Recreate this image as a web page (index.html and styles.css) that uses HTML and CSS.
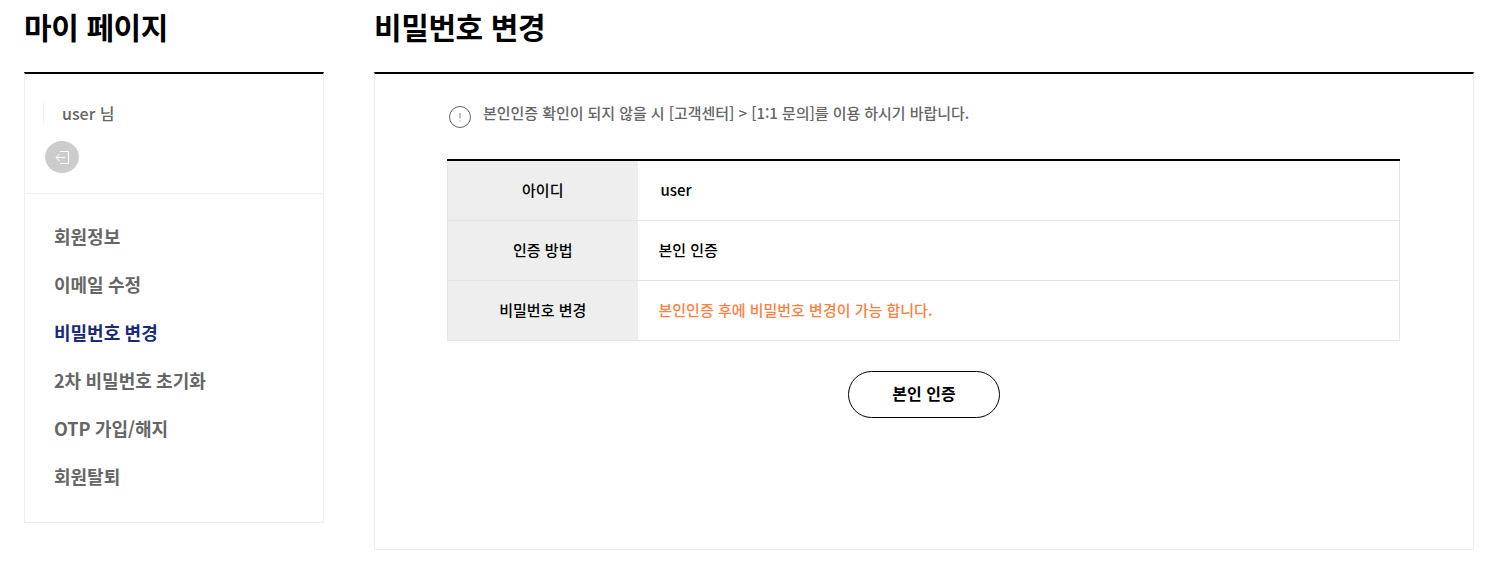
FILE: index.html
```html
<!DOCTYPE html>
<html lang="ko">
<head>
<meta charset="utf-8" />
<title>비밀번호 변경</title>
<link rel="stylesheet" href="styles.css">
</head>
<body>
<div class="wrap">
	<div class="side">
		<h2 class="page_title">마이 페이지</h2>
		<div class="side_box">
			<div class="user_area">
				<p class="user_name">user 님</p>
				<a class="logout" href="#"><svg width="14" height="13" viewBox="0 0 14 13" fill="none" stroke="#fff" stroke-width="1"><path d="M5 0.5H13.5V12.5H5"/><path d="M10 6.5H1M4.5 3L1 6.5L4.5 10"/></svg></a>
			</div>
			<ul class="side_menu">
				<li>회원정보</li>
				<li>이메일 수정</li>
				<li class="on">비밀번호 변경</li>
				<li>2차 비밀번호 초기화</li>
				<li>OTP 가입/해지</li>
				<li>회원탈퇴</li>
			</ul>
		</div>
	</div>
	<div class="main">
		<h2 class="page_title">비밀번호 변경</h2>
		<div class="main_box">
			<p class="notice"><svg width="22" height="22" viewBox="0 0 22 22" fill="none"><circle cx="11" cy="11" r="10.5" stroke="#666"/><path d="M11 7V12.5M11 14.5V15.5" stroke="#a0708a"/></svg><span>본인인증 확인이 되지 않을 시 [고객센터] &gt; [1:1 문의]를 이용 하시기 바랍니다.</span></p>
			<table class="info_table">
				<tr>
					<th>아이디</th>
					<td class="user_id">user</td>
				</tr>
				<tr>
					<th>인증 방법</th>
					<td>본인 인증</td>
				</tr>
				<tr>
					<th>비밀번호 변경</th>
					<td class="warn">본인인증 후에 비밀번호 변경이 가능 합니다.</td>
				</tr>
			</table>
			<div class="btn_area"><a class="btn_auth" href="#">본인 인증</a></div>
		</div>
	</div>
</div>
</body>
</html>
```

FILE: styles.css
```css
* {
	box-sizing: border-box;
}
body {
	margin: 0;
	font-family: "Noto Sans CJK KR", "Noto Sans", sans-serif;
	font-size: 14px;
	color: #000;
	background-color: #fff;
}
ul, p, h2 {
	margin: 0;
	padding: 0;
}
.wrap {
	display: flex;
	gap: 50px;
	padding: 0 17px 0 24px;
}
.side {
	width: 300px;
}
.main {
	width: 1100px;
}
.page_title {
	height: 72px;
	font-size: 30px;
	line-height: 52px;
	font-weight: 700;
	letter-spacing: -0.4px;
}
.side_box {
	height: 451px;
	border: 1px solid #eee;
	border-top: 2px solid #000;
}
.user_area {
	height: 120px;
	padding: 28px 0 0 18px;
	border-bottom: 1px solid #eee;
}
.user_name {
	padding-left: 18px;
	border-left: 1px solid #f4f4f4;
	font-size: 16px;
	line-height: 22px;
	font-weight: 500;
	color: #666;
}
.logout {
	display: flex;
	align-items: center;
	justify-content: center;
	width: 34px;
	height: 32px;
	margin: 17px 0 0 2px;
	border-radius: 50%;
	background-color: #ccc;
}
.side_menu {
	list-style: none;
	padding: 18px 0 0 29px;
}
.side_menu li {
	height: 48px;
	font-size: 18px;
	line-height: 48px;
	font-weight: 700;
	word-spacing: -0.7px;
	color: #666;
}
.side_menu li.on {
	color: #1c2a7a;
}
.main_box {
	height: 478px;
	padding: 0 72px;
	border: 1px solid #eee;
	border-top: 2px solid #000;
}
.notice {
	display: flex;
	gap: 12px;
	padding: 29px 0 0 2px;
	height: 85px;
	font-size: 15px;
	line-height: 20px;
	font-weight: 500;
	letter-spacing: -0.05px;
	color: #666;
}
.notice svg {
	margin-top: 3px;
}
.info_table {
	width: 953px;
	border-collapse: collapse;
	border-top: 2px solid #000;
}
.info_table th, .info_table td {
	height: 60px;
	border: 1px solid #e5e5e5;
	font-size: 15px;
	font-weight: 500;
	padding-bottom: 2px;
}
.info_table tr:first-child th, .info_table tr:first-child td {
	border-top: 0;
}
.info_table th {
	width: 190px;
	background-color: #eee;
	border-right: 0;
}
.info_table td {
	padding-left: 21px;
	border-left: 0;
}
.info_table td.user_id {
	padding-left: 23px;
	font-size: 15px;
}
.info_table td.warn {
	color: #ff7f40;
}
.btn_area {
	display: flex;
	justify-content: center;
	padding-top: 30px;
}
.btn_auth {
	width: 152px;
	height: 47px;
	border: 1px solid #000;
	border-radius: 24px;
	font-size: 16px;
	line-height: 42px;
	font-weight: 700;
	text-align: center;
	text-decoration: none;
	color: #000;
}
```
